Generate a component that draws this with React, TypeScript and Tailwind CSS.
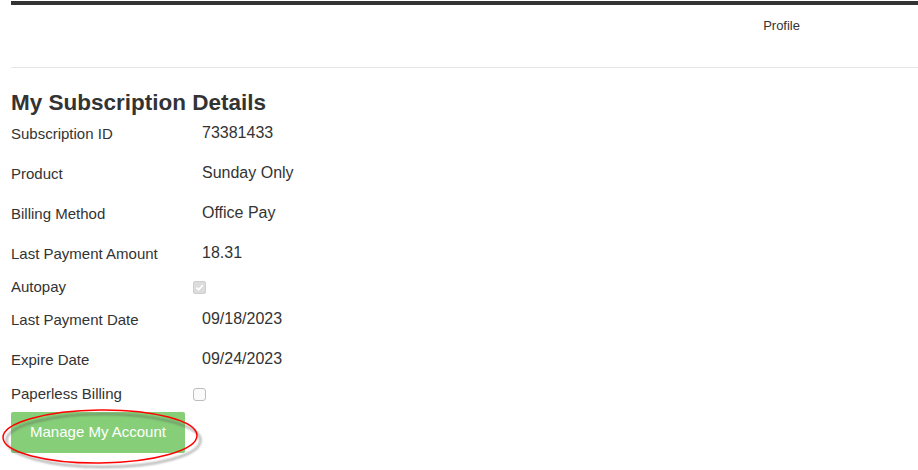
const rows: { label: string; value?: string; check?: "on" | "off" }[] = [
  { label: "Subscription ID", value: "73381433" },
  { label: "Product", value: "Sunday Only" },
  { label: "Billing Method", value: "Office Pay" },
  { label: "Last Payment Amount", value: "18.31" },
  { label: "Autopay", check: "on" },
  { label: "Last Payment Date", value: "09/18/2023" },
  { label: "Expire Date", value: "09/24/2023" },
  { label: "Paperless Billing", check: "off" },
];

const Checkbox = ({ checked }: { checked: boolean }) =>
  checked ? (
    <span className="w-[13px] h-[13px] rounded-[2px] bg-[#dcdcdc] border border-[#cfcfcf] flex items-center justify-center">
      <svg width="9" height="9" viewBox="0 0 10 10">
        <path d="M1.5 5.2 L4 7.6 L8.6 2.4" fill="none" stroke="#fff" strokeWidth="1.8" />
      </svg>
    </span>
  ) : (
    <span className="w-[13px] h-[13px] rounded-[3px] bg-[#fafafa] border border-[#bdbdbd]" />
  );

const App = () => {
  return (
    <div className="w-[918px] h-[470px] bg-white overflow-hidden font-['Liberation_Sans',Arial,sans-serif] text-[#333]">
      <div className="pl-[11px]">
        <div className="mt-[1px] h-[4px] bg-[#333]" />
        <div className="h-[62px] flex justify-end pr-[118px] pt-[13px]">
          <span className="text-[13px] leading-[16px]">Profile</span>
        </div>
        <div className="h-[1px] bg-[#e6e6e6]" />
        <h3 className="mt-[24px] h-[22px] leading-[22px] text-[22.5px] font-bold">
          My Subscription Details
        </h3>
        <div className="flex flex-col">
          {rows.map((r, i) => (
            <div
              key={r.label}
              className={`flex items-center ${
                r.check ? (i === 7 ? "h-[28px]" : "h-[26px]") : "h-[40px]"
              }`}
            >
              <span className="w-[182px] text-[15px] leading-[20px]">{r.label}</span>
              {r.check ? (
                <Checkbox checked={r.check === "on"} />
              ) : (
                <span className="pl-[9px] pb-[2px] text-[16px] leading-[20px]">{r.value}</span>
              )}
            </div>
          ))}
        </div>
        <div className="relative mt-[4px] w-[174px]">
          <button className="w-[174px] h-[41px] bg-[#86cf78] text-white text-[15px] rounded-[2px]">
            Manage My Account
          </button>
          <svg
            className="absolute left-[-11px] top-[-6px] pointer-events-none"
            width="214"
            height="64"
            viewBox="0 0 214 64"
          >
            <defs>
              <filter id="sh" x="-10%" y="-30%" width="120%" height="160%">
                <feGaussianBlur stdDeviation="1.2" />
              </filter>
            </defs>
            <ellipse
              cx="102"
              cy="33"
              rx="97"
              ry="26.5"
              fill="none"
              stroke="#555"
              strokeOpacity="0.5"
              strokeWidth="2"
              filter="url(#sh)"
              transform="translate(1.5 1.5)"
            />
            <ellipse
              cx="100"
              cy="30.5"
              rx="97"
              ry="26.5"
              fill="none"
              stroke="#f00"
              strokeWidth="1.5"
              transform="rotate(-0.6 100 30.5)"
            />
          </svg>
        </div>
      </div>
    </div>
  );
};

export default App;
